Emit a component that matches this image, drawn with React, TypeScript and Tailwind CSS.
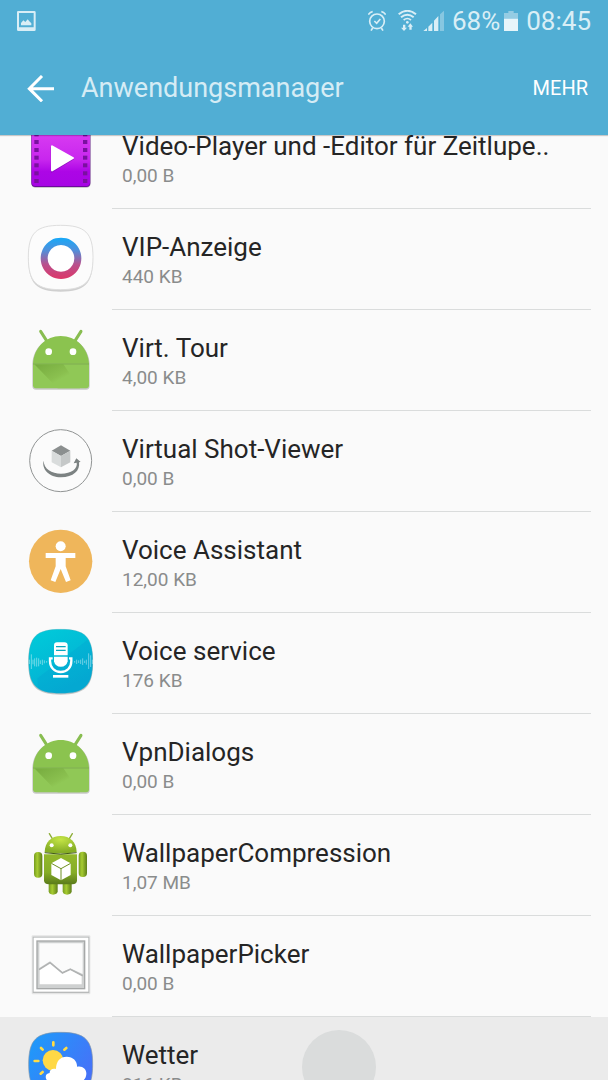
import React from 'react';

const ICON = 'block h-16 w-16 shrink-0 overflow-visible';

function VideoIcon() {
  return (
    <svg viewBox="54 0 192 192" className={ICON} aria-hidden="true">
      <defs>
        <linearGradient id="video" x1="0" y1="0" x2="0" y2="1">
          <stop offset="0" stopColor="#dc40f2" />
          <stop offset="0.55" stopColor="#c826ee" />
          <stop offset="0.75" stopColor="#ad06e6" />
          <stop offset="1" stopColor="#a705e4" />
        </linearGradient>
      </defs>
      <rect x="64" y="14" width="178" height="174" rx="13" fill="#000" opacity="0.25" />
      <rect x="64" y="8" width="177" height="178" rx="12" fill="#6c0a9c" />
      <rect x="65" y="8" width="175" height="175" rx="11" fill="url(#video)" />
      {[22, 45, 69, 92, 115, 139, 162].map((y) => (
        <g key={y} fill="#7a109f">
          <rect x="73" y={y} width="13" height="12" />
          <rect x="219" y={y} width="13" height="12" />
        </g>
      ))}
      <path d="M124 67 L190 102 L125 141 Z" fill="#6c0a9c" opacity="0.5" stroke="#6c0a9c" strokeWidth="4" strokeLinejoin="round" />
      <path d="M126 64 L189 99 L126 136 Z" fill="#fff" stroke="#fff" strokeWidth="6" strokeLinejoin="round" />
    </svg>
  );
}

function VipIcon() {
  return (
    <svg viewBox="54 48 192 192" className={ICON} aria-hidden="true">
      <defs>
        <linearGradient id="vip" x1="0" y1="0" x2="0" y2="1">
          <stop offset="0" stopColor="#16a9f8" />
          <stop offset="0.3" stopColor="#4f90dc" />
          <stop offset="0.65" stopColor="#b9508d" />
          <stop offset="1" stopColor="#dd3668" />
        </linearGradient>
      </defs>
      <path d="M152 52 C225 52 249 72 249 145 C249 222 225 245 152 245 C79 245 55 222 55 145 C55 72 79 52 152 52 Z" fill="#cfcfcf" />
      <path d="M152 46 C225 46 249 68 249 142 C249 216 225 239 152 239 C79 239 55 216 55 142 C55 68 79 46 152 46 Z" fill="#fcfcfc" stroke="#dedede" strokeWidth="3" />
      <circle cx="153" cy="145" r="50" fill="#fff" stroke="none" />
      <path fillRule="evenodd" d="M153 83 a61 62 0 1 0 0.1 0 Z M153 105 a40 40 0 1 1 -0.1 0 Z" fill="url(#vip)" />
    </svg>
  );
}

function AndroidIcon() {
  return (
    <svg viewBox="54 36 192 192" className={ICON} aria-hidden="true">
      <defs>
        <linearGradient id="fold" x1="0" y1="0" x2="1" y2="1">
          <stop offset="0" stopColor="#76ab3e" />
          <stop offset="0.5" stopColor="#8ac04f" />
          <stop offset="0.6" stopColor="#90c856" />
        </linearGradient>
      </defs>
      <path d="M67 146 C69 99 106 66 152 66 C200 66 236 99 239 146 V212 Q239 224 228 224 H78 Q67 224 67 212 Z" fill="#000" opacity="0.2" />
      <path d="M92 49 L111 79 M213 49 L194 79" stroke="#88bd50" strokeWidth="9" strokeLinecap="round" />
      <path d="M69 146 C71 98 108 63 152 63 C198 63 234 98 237 146 Z" fill="#8bc34f" />
      <path d="M69 148 H237 V211 Q237 220 228 220 H78 Q69 220 69 211 Z" fill="#90c856" />
      <path d="M73 148 L143 220 H210 L160 148 Z" fill="url(#fold)" />
      <rect x="69" y="145" width="168" height="4" fill="#7cb345" />
      <circle cx="116" cy="110" r="10" fill="#fff" />
      <circle cx="189" cy="110" r="10" fill="#fff" />
    </svg>
  );
}

function ShotIcon() {
  return (
    <svg viewBox="54 39 192 192" className={ICON} aria-hidden="true">
      <circle cx="152" cy="137" r="93" fill="#fbfbfb" stroke="#919494" strokeWidth="3" />
      <path d="M153 91 L181 107 L153 123 L125 107 Z" fill="#8b8f8f" />
      <path d="M125 107 L153 123 V157 L125 142 Z" fill="#d9dcdc" />
      <path d="M181 107 L153 123 V157 L181 142 Z" fill="#c5c8c8" />
      <path d="M101 137 C94 162 118 187 153 187 C190 187 211 167 207 142 L212 141 L199 130 L191 145 L200 143 C204 160 184 176 153 176 C125 176 101 161 101 137 Z" fill="#7c8282" />
    </svg>
  );
}

function AssistantIcon() {
  return (
    <svg viewBox="54 42 192 192" className={ICON} aria-hidden="true">
      <circle cx="152" cy="139" r="95" fill="#efb65b" />
      <circle cx="152" cy="94" r="15" fill="#fff" />
      <path d="M107 114 H196 V129 H167 V154 L182 196 L168 201 L152 162 L136 201 L122 196 L137 154 V129 H107 Z" fill="#fff" />
    </svg>
  );
}

function VoiceIcon() {
  return (
    <svg viewBox="54 45 192 192" className={ICON} aria-hidden="true">
      <defs>
        <linearGradient id="voice" x1="0" y1="0" x2="0.5" y2="1">
          <stop offset="0" stopColor="#00ccda" />
          <stop offset="1" stopColor="#04add3" />
        </linearGradient>
      </defs>
      <path d="M152 48 C225 48 249 70 249 142 C249 216 225 239 152 239 C79 239 55 216 55 142 C55 70 79 48 152 48 Z" fill="#c9c9c9" />
      <path d="M152 43 C225 43 248 65 248 139 C248 212 225 235 152 235 C79 235 56 212 56 139 C56 65 79 43 152 43 Z" fill="url(#voice)" stroke="#5aa7b6" strokeWidth="1" />
      <path d="M232 75 C246 92 248 113 248 139 C248 212 225 235 152 235 C120 235 98 231 84 220 L82 190 Z" fill="#0496cc" opacity="0.22" />
      <path
        d="M58 134 V147 M64 118 V162 M69 134 V148 M74 130 V154 M80 128 V155 M86 130 V154 M91 136 V147 M97 134 V150 M103 136 V145 M110 138 V143 M194 138 V143 M200 134 V147 M206 136 V144 M212 134 V147 M218 130 V150 M224 137 V144 M229 134 V149 M236 115 V162 M242 121 V156 M247 134 V147"
        stroke="#fff"
        strokeWidth="3"
        opacity="0.42"
      />
      <path d="M141 82 H163 Q173 82 173 91 V121 H132 V91 Q132 82 141 82 Z" fill="#fff" />
      <path d="M138 95 H167 M138 106 H167" stroke="#08a8bf" strokeWidth="4" />
      <path d="M132 125 H173 V139 A21 21 0 0 1 132 139 Z" fill="#fff" />
      <path d="M128 130 H120 V138 C120 158 134 171 152 171 C171 171 184 158 184 138 V130 H177" fill="none" stroke="#fff" strokeWidth="7" />
      <path d="M129 184 H175" stroke="#fff" strokeWidth="8" />
    </svg>
  );
}

function RobotIcon() {
  return (
    <svg viewBox="54 36 192 192" className={ICON} aria-hidden="true">
      <defs>
        <linearGradient id="limb" x1="0" y1="0" x2="1" y2="0">
          <stop offset="0" stopColor="#759b20" />
          <stop offset="0.4" stopColor="#a7cc31" />
          <stop offset="1" stopColor="#5d7e18" />
        </linearGradient>
        <linearGradient id="torso" x1="0" y1="0" x2="0" y2="1">
          <stop offset="0" stopColor="#93b82b" />
          <stop offset="0.6" stopColor="#86ad28" />
          <stop offset="1" stopColor="#5a7a1a" />
        </linearGradient>
        <radialGradient id="head" cx="0.5" cy="0.2" r="0.7">
          <stop offset="0" stopColor="#c4e445" />
          <stop offset="1" stopColor="#86ae26" />
        </radialGradient>
      </defs>
      <path d="M118 41 L127 56 M187 41 L178 56" stroke="#8cad35" strokeWidth="4" strokeLinecap="round" />
      <rect x="72" y="96" width="25" height="77" rx="12" fill="url(#limb)" />
      <rect x="206" y="95" width="25" height="76" rx="12" fill="url(#limb)" />
      <path d="M116 186 H143 V214 Q142 224 129 224 Q117 224 116 214 Z" fill="url(#limb)" />
      <path d="M158 186 H185 V214 Q184 224 171 224 Q159 224 158 214 Z" fill="url(#limb)" />
      <path d="M102 103 H201 V181 Q201 193 187 193 H117 Q102 193 102 181 Z" fill="url(#torso)" />
      <path d="M104 96 C105 66 124 48 152 48 C180 48 199 66 200 96 Q152 105 104 96 Z" fill="url(#head)" />
      <path d="M104 98 Q152 107 200 98" fill="none" stroke="#405a12" strokeWidth="3" />
      <circle cx="125" cy="76" r="6" fill="#fff" />
      <circle cx="181" cy="76" r="6" fill="#fff" />
      <path d="M153 114 L182 130 V165 L153 181 L124 165 V130 Z" fill="#fff" />
      <path d="M124 130 L153 146 L182 130 M153 146 V181" fill="none" stroke="#6f9122" strokeWidth="3" />
    </svg>
  );
}

function PickerIcon() {
  return (
    <svg viewBox="54 39 192 192" className={ICON} aria-hidden="true">
      <rect x="65" y="46" width="176" height="177" rx="3" fill="#e4e4e4" />
      <rect x="68" y="50" width="170" height="169" fill="#b8baba" />
      <rect x="71" y="53" width="164" height="162" fill="#fff" />
      <rect x="79" y="61" width="147" height="147" fill="#a6a8a8" />
      <rect x="83" y="65" width="139" height="139" fill="#cfd1d1" />
      <path d="M88 70 H218 V162 L181 145 L157 156 L120 124 L88 144 Z" fill="#fbfbfb" />
      <path d="M87 149 L120 128 L157 159 L181 148 L218 167" fill="none" stroke="#b0b2b2" strokeWidth="5" />
      <path d="M89 151 L120 131 L157 162 L181 151 L215 169 V193 H89 Z" fill="#fff" />
    </svg>
  );
}

function WeatherIcon() {
  return (
    <svg viewBox="54 102 192 192" className={ICON} aria-hidden="true">
      <defs>
        <linearGradient id="sky" x1="0" y1="0" x2="1" y2="0.6">
          <stop offset="0" stopColor="#1b9dfa" />
          <stop offset="1" stopColor="#4672f8" />
        </linearGradient>
      </defs>
      <path d="M152 97 C225 97 248 119 248 193 C248 266 225 289 152 289 C79 289 56 266 56 193 C56 119 79 97 152 97 Z" fill="url(#sky)" stroke="#8495a8" strokeWidth="2" />
      <path d="M130 127 V136 M93 144 L98 149 M169 144 L163 149 M74 183 H85 M92 221 L98 216" stroke="#ffdc45" strokeWidth="8" strokeLinecap="round" />
      <circle cx="129" cy="181" r="31" fill="#ffd845" />
      <path d="M120 245 C104 244 102 220 119 219 C118 208 129 204 138 207 C138 184 150 170 170 170 C190 170 202 184 201 200 C217 196 230 207 229 222 C228 237 219 246 205 246 Z" fill="#fff" />
    </svg>
  );
}

interface AppEntry {
  name: string;
  size: string;
  icon: React.ReactNode;
  pressed?: boolean;
}

const apps: AppEntry[] = [
  { name: 'Video-Player und -Editor für Zeitlupe..', size: '0,00 B', icon: <VideoIcon /> },
  { name: 'VIP-Anzeige', size: '440 KB', icon: <VipIcon /> },
  { name: 'Virt. Tour', size: '4,00 KB', icon: <AndroidIcon /> },
  { name: 'Virtual Shot-Viewer', size: '0,00 B', icon: <ShotIcon /> },
  { name: 'Voice Assistant', size: '12,00 KB', icon: <AssistantIcon /> },
  { name: 'Voice service', size: '176 KB', icon: <VoiceIcon /> },
  { name: 'VpnDialogs', size: '0,00 B', icon: <AndroidIcon /> },
  { name: 'WallpaperCompression', size: '1,07 MB', icon: <RobotIcon /> },
  { name: 'WallpaperPicker', size: '0,00 B', icon: <PickerIcon /> },
  { name: 'Wetter', size: '816 KB', icon: <WeatherIcon />, pressed: true },
];

function StatusBar() {
  return (
    <div className="flex h-[41px] items-center justify-between px-[17px] text-[#d9eef6]">
      <svg viewBox="51 30 57 60" className="h-5 w-[19px]" aria-hidden="true">
        <path fillRule="evenodd" d="M54 30 H103 Q107 30 107 34 V86 Q107 90 103 90 H55 Q51 90 51 86 V34 Q51 30 54 30 Z M57 36 V79 H101 V36 Z" fill="currentColor" />
        <path d="M63 73 V66 L70 58 L76 63 L83 55 L88 61 L94 67 V73 Z" fill="currentColor" />
      </svg>
      <div className="flex items-center">
        <svg viewBox="54 27 54 66" className="h-[22px] w-[18px]" fill="none" stroke="currentColor" aria-hidden="true">
          <circle cx="81" cy="61" r="22" strokeWidth="5" />
          <path d="M73 60 L80 67 L91 54" strokeWidth="5" />
          <path d="M55 41 Q60 33 68 32 M94 32 Q102 33 107 41" strokeWidth="5" />
          <path d="M68 81 L63 89 M94 81 L99 89" strokeWidth="5" />
        </svg>
        <svg viewBox="144 27 57 66" className="ml-3 h-[22px] w-[19px]" fill="none" stroke="currentColor" aria-hidden="true">
          <path d="M146 40 Q172 19 198 40" strokeWidth="6" />
          <path d="M153 49 Q172 34 191 49" strokeWidth="6" />
          <path d="M161 57 Q172 48 183 57" strokeWidth="5" />
          <circle cx="172" cy="64" r="4" fill="currentColor" stroke="none" />
          <path d="M159 71 H166 V80 H171 L162 90 L153 80 H159 Z M178 86 V77 H173 L181 67 L189 77 H185 V86 Z" fill="currentColor" stroke="none" />
        </svg>
        <svg viewBox="219 27 63 66" className="ml-[6px] h-[22px] w-[21px]" fill="currentColor" aria-hidden="true">
          <path d="M220 90 L231 81 V90 Z M235 77 L247 65 V90 H235 Z M252 59 L265 45 V90 H252 Z" />
          <path d="M270 40 L282 29 V90 H270 Z" opacity="0.4" />
        </svg>
        <span className="ml-2 text-[26px] leading-8">68%</span>
        <svg viewBox="462 27 42 66" className="ml-1 h-[22px] w-[14px]" aria-hidden="true">
          <path d="M475 30 H491 V36 H504 V53 H462 V36 H475 Z" fill="#94cce3" />
          <path d="M462 53 H504 V90 H462 Z" fill="#e6f5fa" />
        </svg>
        <span className="ml-2 text-[26px] leading-8">08:45</span>
      </div>
    </div>
  );
}

function AppRow({ app }: { app: AppEntry }) {
  return (
    <li>
      <button
        type="button"
        className={`relative flex h-[101px] w-full items-start pl-7 pr-[17px] text-left ${app.pressed ? 'bg-[#ebebeb]' : ''}`}
      >
        <span className="mt-[17px] shrink-0">{app.icon}</span>
        <span
          className={`ml-5 flex h-full min-w-0 flex-1 flex-col gap-[2px] pl-[10px] pt-[22px] ${app.pressed ? '' : 'border-b border-[#dadcdc]'}`}
        >
          <span className="truncate text-[26px] leading-8 text-[#252525]">{app.name}</span>
          <span className="text-[19px] leading-6 text-[#8a8c8c]">{app.size}</span>
        </span>
        {app.pressed && (
          <span className="absolute left-[302px] top-[13px] h-[74px] w-[74px] rounded-full bg-[#dadcdc]" />
        )}
      </button>
    </li>
  );
}

export default function App() {
  return (
    <div className="flex h-screen flex-col overflow-hidden bg-[#fafafa] font-[Roboto,sans-serif]">
      <header className="z-10 shrink-0 bg-[#51aed4] shadow-[0_1px_1px_rgba(0,0,0,0.2)]">
        <StatusBar />
        <div className="flex h-[94px] items-center pl-[27px] pr-5">
          <button type="button" aria-label="Zurück" className="shrink-0">
            <svg viewBox="81 222 81 81" className="block h-[27px] w-[27px]" fill="none" stroke="#fff" strokeWidth="9" aria-hidden="true">
              <path d="M126 225 L88 263 L126 301 M86 263 H162" />
            </svg>
          </button>
          <h1 className="ml-[27px] min-w-0 flex-1 truncate text-[27px] leading-8 text-[#d5ecf5]">Anwendungsmanager</h1>
          <button type="button" className="text-[20px] leading-6 text-white">
            MEHR
          </button>
        </div>
      </header>
      <main className="min-h-0 flex-1 overflow-hidden">
        {/* list is scrolled part way into its first row */}
        <ul className="-mt-[27px]">
          {apps.map((app) => (
            <AppRow key={app.name} app={app} />
          ))}
        </ul>
      </main>
    </div>
  );
}
